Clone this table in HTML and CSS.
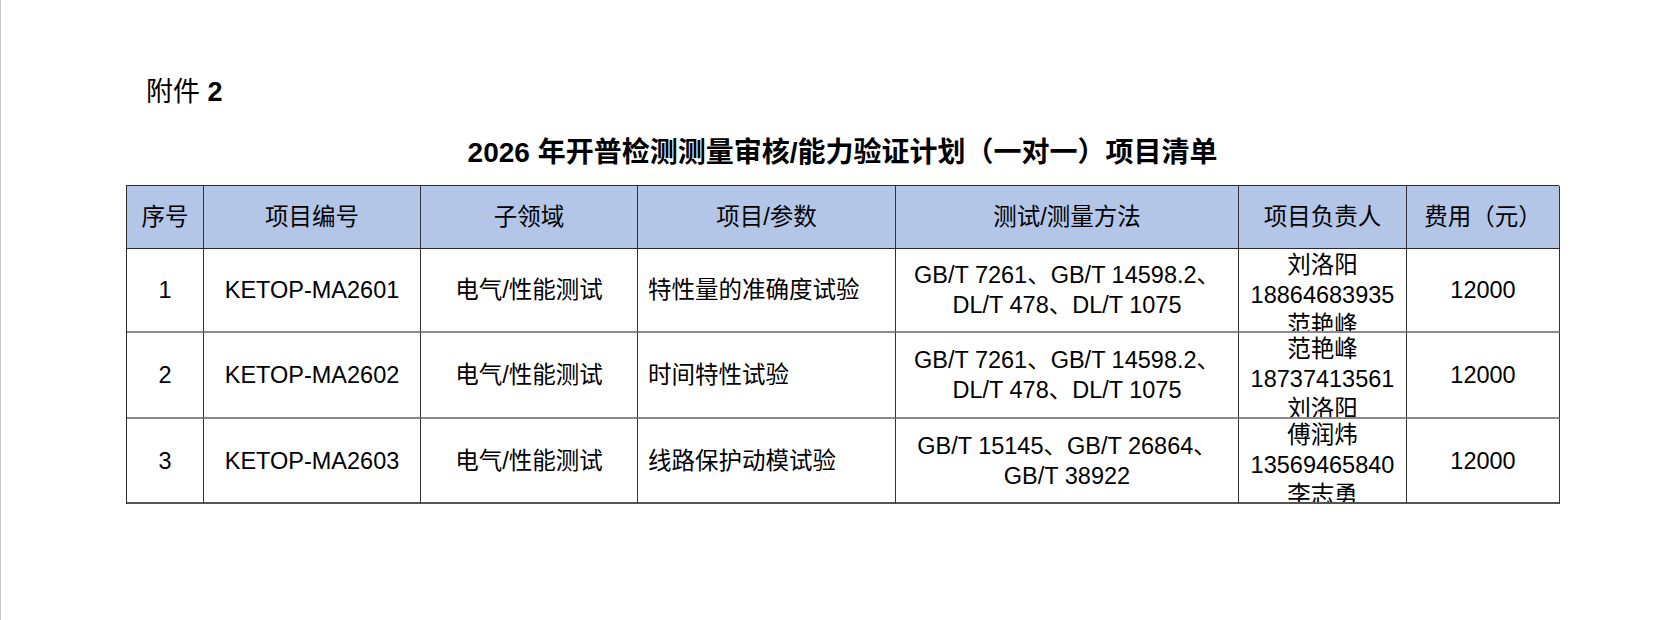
FILE: index.html
```html
<!DOCTYPE html>
<html lang="zh-CN">
<head>
<meta charset="utf-8">
<title>附件 2</title>
<link rel="stylesheet" href="styles.css">
</head>
<body>
<div class="page">
  <div class="attach">附件 <b>2</b></div>
  <h1 class="title"><span class="num">2026</span> 年开普检测测量审核<span class="num">/</span>能力验证计划（一对一）项目清单</h1>
  <div class="grid">
    <div class="cell head">序号</div>
    <div class="cell head">项目编号</div>
    <div class="cell head">子领域</div>
    <div class="cell head">项目/参数</div>
    <div class="cell head">测试/测量方法</div>
    <div class="cell head">项目负责人</div>
    <div class="cell head">费用（元）</div>

    <div class="cell">1</div>
    <div class="cell">KETOP-MA2601</div>
    <div class="cell">电气/性能测试</div>
    <div class="cell left">特性量的准确度试验</div>
    <div class="cell multi">GB/T 7261、GB/T 14598.2、<br>DL/T 478、DL/T 1075</div>
    <div class="cell who"><div>刘洛阳<br>18864683935<br>范艳峰</div></div>
    <div class="cell">12000</div>

    <div class="cell">2</div>
    <div class="cell">KETOP-MA2602</div>
    <div class="cell">电气/性能测试</div>
    <div class="cell left">时间特性试验</div>
    <div class="cell multi">GB/T 7261、GB/T 14598.2、<br>DL/T 478、DL/T 1075</div>
    <div class="cell who"><div>范艳峰<br>18737413561<br>刘洛阳</div></div>
    <div class="cell">12000</div>

    <div class="cell last">3</div>
    <div class="cell last">KETOP-MA2603</div>
    <div class="cell last">电气/性能测试</div>
    <div class="cell left last">线路保护动模试验</div>
    <div class="cell multi last">GB/T 15145、GB/T 26864、<br>GB/T 38922</div>
    <div class="cell who last"><div>傅润炜<br>13569465840<br>李志勇</div></div>
    <div class="cell last">12000</div>
  </div>
</div>
</body>
</html>
```
FILE: styles.css
```css
html, body {
  margin: 0;
  padding: 0;
  background: #ffffff;
}

body {
  font-family: "Liberation Sans", "Noto Sans CJK SC", sans-serif;
  color: #000;
}

.page {
  border-left: 1px solid #c8c8c8;
  min-height: 620px;
  box-sizing: border-box;
  padding: 76px 0 0 125px;
}

.attach {
  margin-left: 20px;
  font-size: 27px;
  line-height: 32px;
}

.attach b {
  font-weight: bold;
}

.title {
  width: 1433px;
  margin: 28px 0 0 0;
  font-size: 28px;
  line-height: 34px;
  font-weight: bold;
  text-align: center;
}

.grid {
  margin-top: 15px;
  width: 1433px;
  display: grid;
  grid-template-columns: 77px 217px 217px 258px 343px 168px 153px;
  grid-template-rows: 63px 84px 86px 85px;
  border-left: 1px solid #2a2a2a;
  border-top: 1px solid #2a2a2a;
  box-sizing: border-box;
  font-size: 23.5px;
}

.cell {
  box-sizing: border-box;
  border-right: 1px solid #333;
  border-bottom: 2px solid #8a8a8a;
  display: flex;
  align-items: center;
  justify-content: center;
  text-align: center;
  line-height: 30px;
  overflow: hidden;
}

.head {
  background: #b4c6e7;
  border-bottom: 1px solid #2a2a2a;
}

.cell.last {
  border-bottom: 2px solid #555;
}

.left {
  justify-content: flex-start;
  text-align: left;
  padding-left: 10px;
}

.who {
  align-items: flex-start;
}

.who > div {
  padding-top: 1px;
}
```
